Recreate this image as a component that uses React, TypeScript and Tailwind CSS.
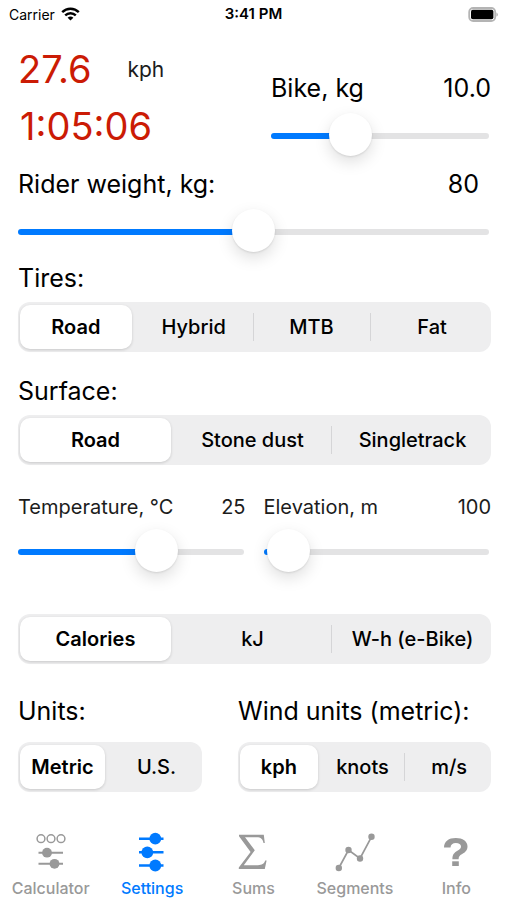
import { useState, type CSSProperties, type ReactNode } from "react";

function Slider({
  label,
  min,
  max,
  step = 1,
  value,
  onChange,
}: {
  label: string;
  min: number;
  max: number;
  step?: number;
  value: number;
  onChange: (v: number) => void;
}) {
  const p = (value - min) / (max - min);
  const fill = { "--fill": `${4 + p * 92}%` } as CSSProperties;
  return (
    <div className="pr-0.5">
      <input
        type="range"
        aria-label={label}
        min={min}
        max={max}
        step={step}
        value={value}
        onChange={(e) => onChange(Number(e.target.value))}
        style={fill}
        className="block h-[46px] w-full cursor-pointer appearance-none bg-transparent outline-none [&::-webkit-slider-runnable-track]:h-1.5 [&::-webkit-slider-runnable-track]:rounded-full [&::-webkit-slider-runnable-track]:bg-[linear-gradient(to_right,#007aff_var(--fill),#e3e3e4_var(--fill))] [&::-webkit-slider-thumb]:-mt-5 [&::-webkit-slider-thumb]:size-[43px] [&::-webkit-slider-thumb]:appearance-none [&::-webkit-slider-thumb]:rounded-full [&::-webkit-slider-thumb]:bg-white [&::-webkit-slider-thumb]:shadow-[0_1px_2px_rgba(0,0,0,0.10),0_6px_16px_rgba(0,0,0,0.13)]"
      />
    </div>
  );
}

function Segmented({ name, label, options }: { name: string; label: string; options: string[] }) {
  const [selected, setSelected] = useState(0);
  return (
    <div
      role="radiogroup"
      aria-label={label}
      className="grid h-[50px] auto-cols-fr grid-flow-col rounded-xl bg-[#eeeeef] py-[3px] pl-0.5"
    >
      {options.map((option, i) => {
        const last = i === options.length - 1;
        const divider = !last && i !== selected && i + 1 !== selected;
        return (
          <label
            key={option}
            className={`relative flex cursor-pointer items-center ${last && i !== selected ? "" : "pr-1.5"}`}
          >
            <input
              type="radio"
              name={name}
              checked={i === selected}
              onChange={() => setSelected(i)}
              className="peer sr-only"
            />
            <span className="flex h-full flex-1 items-center justify-center rounded-[10px] text-[20px] font-medium whitespace-nowrap peer-checked:bg-white peer-checked:font-semibold peer-checked:shadow-[0_1px_3px_rgba(0,0,0,0.16)]">
              {option}
            </span>
            {divider && <span className="absolute right-0.5 h-7 w-px bg-[#d5d5d7]" />}
          </label>
        );
      })}
    </div>
  );
}

function StatusBar() {
  return (
    <header className="grid h-7 grid-cols-3 items-center px-[9px] text-[14px]">
      <div className="flex items-center gap-1.5">
        <span>Carrier</span>
        <svg width="19" height="14" viewBox="0 0 19 14" aria-hidden="true">
          <g fill="none" stroke="#000" strokeWidth="2.4">
            <path d="M1.2 5.2C5.8.6 13.2.6 17.8 5.2" />
            <path d="M4.2 8.4c3-2.9 7.6-2.9 10.6 0" />
          </g>
          <path d="M6.6 10.7c1.7-1.5 4.1-1.5 5.8 0L9.5 13.6z" />
        </svg>
      </div>
      <span className="text-center text-[15px] font-semibold">3:41 PM</span>
      <svg className="justify-self-end" width="30" height="15" viewBox="0 0 30 15" aria-hidden="true">
        <rect x="1.200" y="1" width="26" height="13" rx="4" fill="#fff" stroke="#b4b4b4" strokeWidth="1.800" />
        <rect x="3" y="2.800" width="22.400" height="9.400" rx="1.800" />
        <path d="M28.400 5.400c2 .8 2 3.400 0 4.200z" fill="#b4b4b4" />
      </svg>
    </header>
  );
}

const tabs: { name: string; icon: ReactNode }[] = [
  {
    name: "Calculator",
    icon: (
      <>
        <g fill="none" stroke="currentColor" strokeWidth="1.5">
          <circle cx="10" cy="6.7" r="3.9" />
          <circle cx="20" cy="6.7" r="3.9" />
          <circle cx="30" cy="6.7" r="3.9" />
          <path strokeWidth="2" d="M7.5 20.7H32M7.5 31.8H32" />
        </g>
        <circle cx="16" cy="20.7" r="4.9" />
        <circle cx="23.5" cy="31.8" r="4.9" />
      </>
    ),
  },
  {
    name: "Settings",
    icon: (
      <>
        <path fill="none" stroke="currentColor" strokeWidth="2.6" d="M7 6.7H31.5M7 20.3H31.5M7 33.5H31.5" />
        <circle cx="23.3" cy="6.7" r="5.9" />
        <circle cx="15.3" cy="20.3" r="5.9" />
        <circle cx="23.3" cy="33.5" r="5.9" />
      </>
    ),
  },
  {
    name: "Sums",
    icon: (
      <path d="M6 2.8H30.8L31.800 11H30.500C29.800 7 28 5.200 23.500 5.200H12L21.800 18.300 10.800 33.200H25C29 33.200 31 32 32.200 28.600H33.600L31.800 37H5.800V35.600L17.600 20 6 4.300Z" />
    ),
  },
  {
    name: "Segments",
    icon: (
      <>
        <path fill="none" stroke="currentColor" strokeWidth="1.7" d="M3.8 36 13.5 18 25 26.5 36.5 4.8" />
        <circle cx="3.8" cy="36" r="3.2" />
        <circle cx="13.5" cy="18" r="3.2" />
        <circle cx="25" cy="26.5" r="3.2" />
        <circle cx="36.5" cy="4.8" r="3.2" />
      </>
    ),
  },
  {
    name: "Info",
    icon: (
      <>
        <path d="M8 15.500C8 9.300 12.800 6 19.800 6 26.800 6 31.500 9.300 31.500 14.300 31.500 18.300 29.300 20.300 26.200 22.100 23.500 23.700 22.600 24.500 22.600 27.200H16.400C16.400 22.700 18 20.700 21.400 18.700 23.900 17.200 25 16.300 25 14.400 25 12.300 23 11 19.900 11 16.600 11 14.700 12.600 14.500 15.500Z" />
        <path d="M16.200 29.300H22.800V34H16.200Z" />
      </>
    ),
  },
];

export default function App() {
  const [bike, setBike] = useState(10);
  const [rider, setRider] = useState(80);
  const [temperature, setTemperature] = useState(25);
  const [elevation, setElevation] = useState(100);

  return (
    <div className="flex min-h-screen flex-col bg-white font-['Inter',sans-serif] text-black">
      <StatusBar />

      <main className="flex-1 pr-4 pl-[18px] text-[25px] leading-8">
        <div className="grid grid-cols-2 gap-x-[33px]">
          <div className="pt-[13px] text-[38px] leading-[57px] text-[#cb1b05]">
            <div className="flex items-center gap-9">
              <span>27.6</span>
              <span className="text-[21px] leading-8 text-[#1c1c1c]">kph</span>
            </div>
            <div className="pl-0.5">1:05:06</div>
          </div>
          <div className="flex flex-col gap-[9px] pt-11">
            <div className="flex justify-between">
              <span>Bike, kg</span>
              <span>{bike.toFixed(1)}</span>
            </div>
            <Slider label="Bike, kg" min={5} max={20} step={0.5} value={bike} onChange={setBike} />
          </div>
        </div>

        <div className="mt-[9px] flex flex-col gap-[9px]">
          <div className="flex justify-between pr-3">
            <span>Rider weight, kg:</span>
            <span>{rider}</span>
          </div>
          <Slider label="Rider weight, kg" min={40} max={120} value={rider} onChange={setRider} />
        </div>

        <section className="mt-[7px] flex flex-col gap-2">
          <h2>Tires:</h2>
          <Segmented name="tires" label="Tires" options={["Road", "Hybrid", "MTB", "Fat"]} />
        </section>

        <section className="mt-[23px] flex flex-col gap-2">
          <h2>Surface:</h2>
          <Segmented name="surface" label="Surface" options={["Road", "Stone dust", "Singletrack"]} />
        </section>

        <div className="mt-7 grid grid-cols-2 gap-x-[18px] text-[20px] leading-7 text-[#1c1c1c]">
          <div className="flex flex-col gap-2">
            <div className="flex justify-between">
              <span>Temperature, °C</span>
              <span>{temperature}</span>
            </div>
            <Slider label="Temperature, °C" min={-20} max={50} value={temperature} onChange={setTemperature} />
          </div>
          <div className="flex flex-col gap-2">
            <div className="flex justify-between">
              <span>Elevation, m</span>
              <span>{elevation}</span>
            </div>
            <Slider label="Elevation, m" min={0} max={5000} step={10} value={elevation} onChange={setElevation} />
          </div>
        </div>

        <div className="mt-[39px]">
          <Segmented name="energy" label="Energy units" options={["Calories", "kJ", "W-h (e-Bike)"]} />
        </div>

        <div className="mt-[31px] grid grid-cols-[8fr_11fr] gap-x-9">
          <section className="flex flex-col gap-[15px]">
            <h2>Units:</h2>
            <Segmented name="units" label="Units" options={["Metric", "U.S."]} />
          </section>
          <section className="flex flex-col gap-[15px]">
            <h2 className="whitespace-nowrap">Wind units (metric):</h2>
            <Segmented name="wind" label="Wind units" options={["kph", "knots", "m/s"]} />
          </section>
        </div>
      </main>

      <nav className="grid grid-cols-5 pb-0.5 text-[16px] leading-5 font-medium">
        {tabs.map((tab) => (
          <button
            key={tab.name}
            type="button"
            aria-current={tab.name === "Settings" ? "page" : undefined}
            className={`flex cursor-pointer flex-col items-center gap-1.5 ${
              tab.name === "Settings" ? "text-[#007aff]" : "text-[#999999]"
            }`}
          >
            <svg width="40" height="40" viewBox="0 0 40 40" fill="currentColor" aria-hidden="true">
              {tab.icon}
            </svg>
            {tab.name}
          </button>
        ))}
      </nav>
    </div>
  );
}
